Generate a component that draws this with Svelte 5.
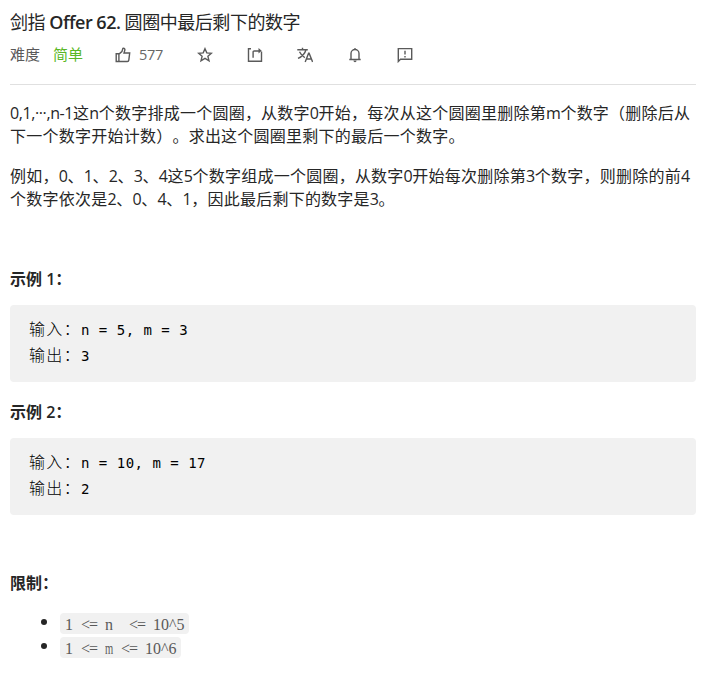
<script>
  const intro = [
    ['0,1,···,n-1这n个数字排成一个圆圈，从数字0开始，每次从这个圆圈里删除第m个数字（删除后从', '下一个数字开始计数）。求出这个圆圈里剩下的最后一个数字。'],
    ['例如，0、1、2、3、4这5个数字组成一个圆圈，从数字0开始每次删除第3个数字，则删除的前4', '个数字依次是2、0、4、1，因此最后剩下的数字是3。']
  ];
  const examples = [
    { title: '示例 1：', input: 'n = 5, m = 3', output: '3' },
    { title: '示例 2：', input: 'n = 10, m = 17', output: '2' }
  ];
  // Split a line into Latin and Chinese runs so each gets its own tracking.
  const runs = (line) => line.match(/[\x20-\x7e·]+|[^\x20-\x7e·]+/g);
  const isLatin = (run) => /^[\x20-\x7e·]/.test(run);
</script>

<main>
  <h4><span>剑指</span> <b>Offer 62.</b> <span>圆圈中最后剩下的数字</span></h4>
  <div class="meta">
    <span class="label">难度</span>
    <span class="easy">简单</span>
    <button class="like" aria-label="like">
      <svg width="16" height="16" viewBox="0 0 16 16"><path d="M1.2 6.7h2.7v7.8H1.2zM3.9 7.1l3-2.5 1-3.2c1.5-.5 2.3.6 1.9 1.9L9 6h5.7l-.9 7.1c-.1.9-.6 1.4-1.4 1.4H3.9" /></svg>
      <span>577</span>
    </button>
    <div class="icons">
      <svg width="16" height="16" viewBox="0 0 16 16"><path d="M8 1.7l1.8 4.2 4.6.4-3.5 3 1.1 4.5L8 11.4l-4 2.4 1.1-4.5-3.5-3 4.6-.4z" /></svg>
      <svg width="16" height="16" viewBox="0 0 16 16"><path d="M4 1.8H1.5v12.4h13V4.6M6.1 10.8V5.2c0-.8.4-1.2 1.2-1.2h5" /><path d="M11.5 1.1v5.3l3.2-2.6z" class="solid" /></svg>
      <svg width="16" height="16" viewBox="0 0 16 16"><path d="M.3 2.7h10.5M5.5.7v2M2.5 4.7c1.4 3 3.3 4.6 5.3 5.9M9 2.8C7.9 6.6 5 9.8 1 11.4M8.2 15l3.4-8.8h.5l3.5 8.8M9.4 12h4.9" /></svg>
      <svg width="16" height="16" viewBox="0 0 16 16"><path d="M2.3 12.5h11.4M4 12.2V6.5a4 4 0 0 1 8 0v5.7M8 1v1.5" /><path d="M6.4 13.6h3.2c-.2 1-.7 1.6-1.6 1.6s-1.4-.6-1.6-1.6z" class="solid" /></svg>
      <svg width="16" height="16" viewBox="0 0 16 16"><path d="M1.3 14.5V1.6h13.4v10.7H3.5zM8 3.8v3.7M8 8.9v1.5" /></svg>
    </div>
  </div>

  {#each intro as lines}
    <p>
      {#each lines as line}
        <span class="line">{#each runs(line) as run}<span class:latin={isLatin(run)}>{run}</span>{/each}</span>
      {/each}
    </p>
  {/each}

  <div class="blank"></div>
  {#each examples as ex}
    <p class="heading">{ex.title}</p>
    <pre><span class="zh">输入：</span>{ex.input}
<span class="zh">输出：</span>{ex.output}</pre>
  {/each}

  <div class="blank short"></div>
  <p class="heading limits">限制：</p>
  <ul>
    <li><code>1 <i>&lt;=</i> n&nbsp; <i>&lt;=</i> 10^5</code></li>
    <li><code>1 <i>&lt;=</i> <span class="m">m</span> <i>&lt;=</i> 10^6</code></li>
  </ul>
</main>

<style>
  :global(body) { background: #fff; }
  main {
    box-sizing: border-box;
    width: 711px;
    height: 675px;
    padding: 10px 15px 0 10px;
    overflow: hidden;
    font: 16px/23px "Open Sans", "Noto Sans CJK SC", sans-serif;
    color: #262626;
    text-spacing-trim: space-all;
    white-space: nowrap;
  }
  h4 { margin: 0; font-size: 18px; line-height: 24px; font-weight: 400; letter-spacing: -0.45px; }
  h4 b { font-weight: 600; letter-spacing: -0.5px; }
  .meta {
    display: flex;
    align-items: center;
    height: 41px;
    padding-bottom: 9px;
    border-bottom: 1px solid #e0e0e0;
    font-size: 15px;
    color: #595959;
  }
  .label { width: 43px; }
  .easy { width: 62px; color: #5ab726; }
  .like { display: flex; align-items: center; gap: 8px; width: 81.5px; padding: 0; border: 0; background: none; font: inherit; font-size: 14.5px; letter-spacing: -0.3px; color: #666; }
  .icons { display: flex; gap: 34px; }
  svg { display: block; fill: none; stroke: #5a5a5a; stroke-width: 1.4; }
  .solid { fill: #5a5a5a; stroke: none; }
  p { margin: 17px 0; }
  .line { display: block; letter-spacing: 0.24px; }
  .latin { letter-spacing: -0.4px; }
  .blank { height: 24px; }
  .short { height: 22px; }
  .heading { margin: 16px 0 14px; font-weight: 600; }
  pre {
    box-sizing: border-box;
    height: 77px;
    margin: 0 0 19px;
    padding: 12px 19px;
    border-radius: 4px;
    background: #f1f1f1;
    color: #000;
    font: 14px/26px "DejaVu Sans Mono", "Noto Sans CJK SC", monospace;
    letter-spacing: 0.5px;
  }
  .zh { font-family: "Noto Sans CJK SC", sans-serif; font-size: 16px; line-height: 0; font-weight: 300; letter-spacing: 1.33px; }
  .limits { margin-bottom: 16px; }
  ul { margin: 0; padding: 0 0 0 50px; list-style: none; }
  li { display: flex; align-items: center; height: 24px; }
  li::before { content: ""; width: 6px; height: 6px; margin: 0 13px 2px -19px; border-radius: 50%; background: #262626; }
  code {
    height: 21px;
    padding: 0 4px 0 5px;
    border-radius: 4px;
    background: #f1f1f1;
    color: #595959;
    font: 16px/23px "Liberation Serif", serif;
    word-spacing: 4px;
  }
  i { font-style: normal; letter-spacing: -1px; }
  .m { display: inline-block; width: 8px; transform: scaleX(0.66); transform-origin: 0 50%; }
</style>
